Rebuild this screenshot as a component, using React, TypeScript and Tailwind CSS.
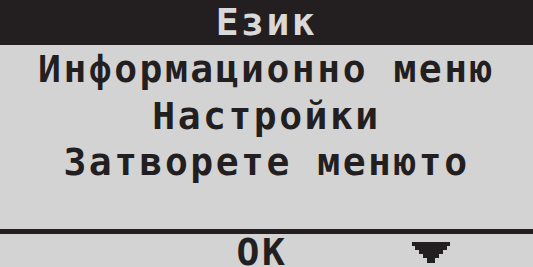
import React from "react";

function DownTriangle() {
  return (
    <svg width="38" height="21" viewBox="0 0 38 21" className="block">
      <polygon
        fill="#231f20"
        points="0,0 38,0 38,4 35,4 35,8 31,8 31,12 27,12 27,16 23,16 23,21 15,21 15,16 11,16 11,12 7,12 7,8 3,8 3,4 0,4"
      />
    </svg>
  );
}

export default function App() {
  return (
    <div className="w-[533px] h-[267px] bg-[#d3d3d3] overflow-hidden flex flex-col font-['DejaVu_Sans_Mono',monospace] font-bold text-[38px] tracking-[2.5px]">
      <div className="h-[45px] shrink-0 bg-[#231f20] text-[#d9d9d9] text-center leading-[44px]">
        Език
      </div>
      <div className="flex-1 pt-[1px] flex flex-col items-center text-[#231f20] leading-[46.5px]">
        <div>Информационно меню</div>
        <div>Настройки</div>
        <div>Затворете менюто</div>
      </div>
      <div className="h-[5px] shrink-0 bg-[#231f20]" />
      <div className="h-[33px] shrink-0 flex items-start text-[#231f20] leading-[36px]">
        <div className="w-[177px]" />
        <div className="w-[170px] text-center">OK</div>
        <div className="flex-1 flex justify-center pt-[8px] pr-[18px]">
          <DownTriangle />
        </div>
      </div>
    </div>
  );
}
